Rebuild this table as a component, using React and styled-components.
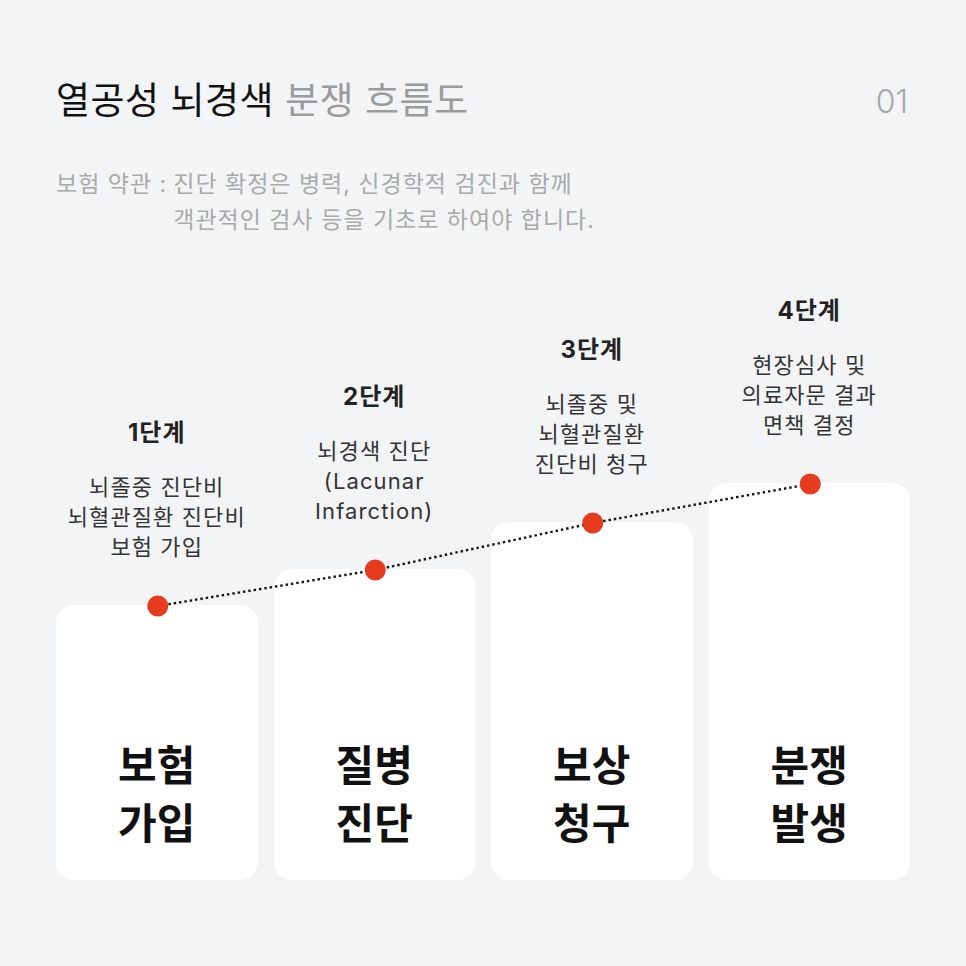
import React from 'react';
import styled, { createGlobalStyle } from 'styled-components';

const GlobalStyle = createGlobalStyle`
  html, body {
    margin: 0;
    padding: 0;
    background-color: #f3f4f6;
  }
  body {
    font-family: Inter, "Noto Sans CJK KR", sans-serif;
  }
`;

const Page = styled.div`
  width: 966px;
  height: 966px;
  box-sizing: border-box;
  padding: 79px 56px 86px;
  display: flex;
  flex-direction: column;
  background-color: #f3f4f6;
`;

const Header = styled.div`
  display: flex;
  justify-content: space-between;
  align-items: center;
`;

const Title = styled.h1`
  margin: 0;
  font-size: 37px;
  line-height: 44px;
  font-weight: 400;
  color: #111;
  letter-spacing: 0.5px;
`;

const Muted = styled.span`
  color: #9b9b9b;
`;

const PageNo = styled.div`
  font-family: Inter, sans-serif;
  font-size: 32px;
  font-weight: 300;
  color: #a8a8a8;
  padding-right: 2px;
`;

const Terms = styled.div`
  display: flex;
  gap: 6px;
  margin-top: 43px;
  font-size: 23px;
  line-height: 36px;
  color: #a9a9a9;
  letter-spacing: 1px;
`;

const TermsLabel = styled.span`
  white-space: nowrap;
`;

const TermsText = styled.p`
  margin: 0;
`;

const Chart = styled.div`
  position: relative;
  margin-top: auto;
  display: grid;
  grid-template-columns: repeat(4, 1fr);
  gap: 16px;
  align-items: end;
`;

const Column = styled.div`
  display: flex;
  flex-direction: column;
  align-items: center;
`;

const Step = styled.div`
  font-size: 24px;
  line-height: 30px;
  font-weight: 700;
  color: #222;
  letter-spacing: 1px;
`;

const Desc = styled.p`
  margin: 24px 0 43px;
  font-size: 22px;
  line-height: 30px;
  color: #333;
  text-align: center;
  letter-spacing: 1.1px;
`;

const Card = styled.div`
  width: 100%;
  height: ${props => props.$h}px;
  box-sizing: border-box;
  background-color: #fff;
  border-radius: 18px;
  display: flex;
  align-items: flex-end;
  justify-content: center;
  padding-bottom: 27px;
`;

const CardTitle = styled.div`
  font-size: 42px;
  line-height: 58px;
  font-weight: 700;
  color: #111;
  text-align: center;
`;

const Overlay = styled.svg`
  position: absolute;
  left: 0;
  bottom: 0;
  pointer-events: none;
  overflow: visible;
`;

const steps = [
  { step: '1단계', desc: ['뇌졸중 진단비', '뇌혈관질환 진단비', '보험 가입'], title: ['보험', '가입'], h: 275 },
  { step: '2단계', desc: ['뇌경색 진단', '(Lacunar', 'Infarction)'], title: ['질병', '진단'], h: 311 },
  { step: '3단계', desc: ['뇌졸중 및', '뇌혈관질환', '진단비 청구'], title: ['보상', '청구'], h: 358 },
  { step: '4단계', desc: ['현장심사 및', '의료자문 결과', '면책 결정'], title: ['분쟁', '발생'], h: 397 }
];

const CHART_W = 854;
const GAP = 16;
const COL_W = (CHART_W - GAP * 3) / 4;
const SVG_H = 420;

function App() {
  const points = steps.map((s, i) => ({
    x: i * (COL_W + GAP) + COL_W / 2 + 1,
    y: SVG_H - s.h + 1
  }));

  return (
    <>
      <GlobalStyle />
      <Page>
        <Header>
          <Title>
            열공성 뇌경색 <Muted>분쟁 흐름도</Muted>
          </Title>
          <PageNo>01</PageNo>
        </Header>

        <Terms>
          <TermsLabel>보험 약관 :</TermsLabel>
          <TermsText>
            진단 확정은 병력, 신경학적 검진과 함께
            <br />
            객관적인 검사 등을 기초로 하여야 합니다.
          </TermsText>
        </Terms>

        <Chart>
          {steps.map(s => (
            <Column key={s.step}>
              <Step>{s.step}</Step>
              <Desc>
                {s.desc.map((line, i) => (
                  <React.Fragment key={i}>
                    {line}
                    {i < s.desc.length - 1 && <br />}
                  </React.Fragment>
                ))}
              </Desc>
              <Card $h={s.h}>
                <CardTitle>
                  {s.title[0]}
                  <br />
                  {s.title[1]}
                </CardTitle>
              </Card>
            </Column>
          ))}

          <Overlay width={CHART_W} height={SVG_H} viewBox={`0 0 ${CHART_W} ${SVG_H}`}>
            <polyline
              points={points.map(p => `${p.x},${p.y}`).join(' ')}
              fill="none"
              stroke="#111"
              strokeWidth="2.4"
              strokeDasharray="2.4 3"
            />
            {points.map((p, i) => (
              <circle key={i} cx={p.x} cy={p.y} r="10.5" fill="#e63b1c" />
            ))}
          </Overlay>
        </Chart>
      </Page>
    </>
  );
}

export default App;
